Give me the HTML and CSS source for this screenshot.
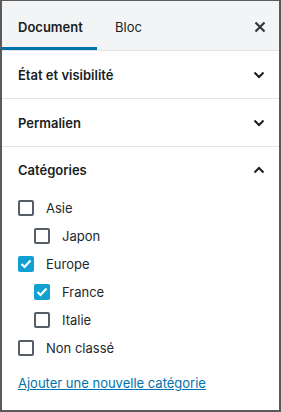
FILE: index.html
```html
<!DOCTYPE html>
<html lang="fr">
<head>
<meta charset="utf-8">
<link rel="stylesheet" href="styles.css">
</head>
<body>
<div class="panel">
  <div class="tabs">
    <div class="tab active">Document</div>
    <div class="tab second">Bloc</div>
    <div class="close">
      <svg width="12" height="12" viewBox="0 0 12 12"><path d="M1.5 1.5 L10.5 10.5 M10.5 1.5 L1.5 10.5" stroke="#32373c" stroke-width="2.2" fill="none"/></svg>
    </div>
  </div>
  <div class="section">
    <span class="title">État et visibilité</span>
    <svg class="chev" width="12" height="8" viewBox="0 0 12 8"><path d="M1.5 1.5 L6 6 L10.5 1.5" stroke="#191e23" stroke-width="2" fill="none"/></svg>
  </div>
  <div class="section">
    <span class="title">Permalien</span>
    <svg class="chev" width="12" height="8" viewBox="0 0 12 8"><path d="M1.5 1.5 L6 6 L10.5 1.5" stroke="#191e23" stroke-width="2" fill="none"/></svg>
  </div>
  <div class="cats">
    <div class="section open">
      <span class="title">Catégories</span>
      <svg class="chev" width="12" height="8" viewBox="0 0 12 8"><path d="M1.5 6.5 L6 2 L10.5 6.5" stroke="#191e23" stroke-width="2" fill="none"/></svg>
    </div>
    <ul class="terms">
      <li class="row"><span class="box"></span><span class="lbl">Asie</span></li>
      <li class="row sub"><span class="box"></span><span class="lbl">Japon</span></li>
      <li class="row"><span class="box on"><svg width="12" height="10" viewBox="0 0 12 10"><path d="M1.5 5 L4.5 8 L10.5 1.5" stroke="#fff" stroke-width="2.2" fill="none"/></svg></span><span class="lbl">Europe</span></li>
      <li class="row sub"><span class="box on"><svg width="12" height="10" viewBox="0 0 12 10"><path d="M1.5 5 L4.5 8 L10.5 1.5" stroke="#fff" stroke-width="2.2" fill="none"/></svg></span><span class="lbl">France</span></li>
      <li class="row sub"><span class="box"></span><span class="lbl">Italie</span></li>
      <li class="row"><span class="box"></span><span class="lbl">Non classé</span></li>
    </ul>
    <a class="add" href="#">Ajouter une nouvelle catégorie</a>
  </div>
</div>
</body>
</html>
```
FILE: styles.css
```css
* { box-sizing: border-box; }
html, body { margin: 0; padding: 0; background: #fff; }
body { font-family: Inter, "Liberation Sans", sans-serif; font-size: 13px; color: #191e23; }
.panel {
  width: 281px;
  height: 412px;
  border: 2px solid #5a5a5a;
  border-top-width: 1px;
  overflow: hidden;
}
.tabs {
  display: flex;
  align-items: stretch;
  height: 50px;
  background: #f3f4f5;
  border-bottom: 1px solid #e2e4e7;
}
.tab {
  display: flex;
  align-items: center;
  padding: 5px 16px 0;
  font-weight: 400;
  color: #191e23;
  border-bottom: 3px solid transparent;
}
.tab.second { padding-left: 18px; }
.tab.active {
  font-weight: 600;
  width: 95px;
  border-bottom-color: #0073aa;
}
.close {
  margin-left: auto;
  display: flex;
  align-items: center;
  padding: 2px 13px 0 0;
}
.section {
  display: flex;
  align-items: center;
  justify-content: space-between;
  height: 48px;
  padding: 0 14px 0 16px;
  border-bottom: 1px solid #e2e4e7;
}
.title { font-weight: 600; }
.cats .section { border-bottom: none; height: 46px; }
.terms {
  list-style: none;
  margin: 0;
  padding: 0 16px;
  display: flex;
  flex-direction: column;
  gap: 12px;
  margin-top: 7px;
}
.row {
  display: flex;
  align-items: center;
  height: 16px;
}
.row.sub { padding-left: 16px; }
.box {
  width: 16px;
  height: 16px;
  border: 2px solid #555d66;
  border-radius: 2px;
  display: flex;
  align-items: center;
  justify-content: center;
  margin-right: 12px;
}
.box.on { background: #11a0d2; border-color: #11a0d2; }
.lbl { color: #23282d; }
.add {
  display: block;
  margin: 19px 16px 0;
  color: #0073aa;
  text-decoration: underline;
}
```
